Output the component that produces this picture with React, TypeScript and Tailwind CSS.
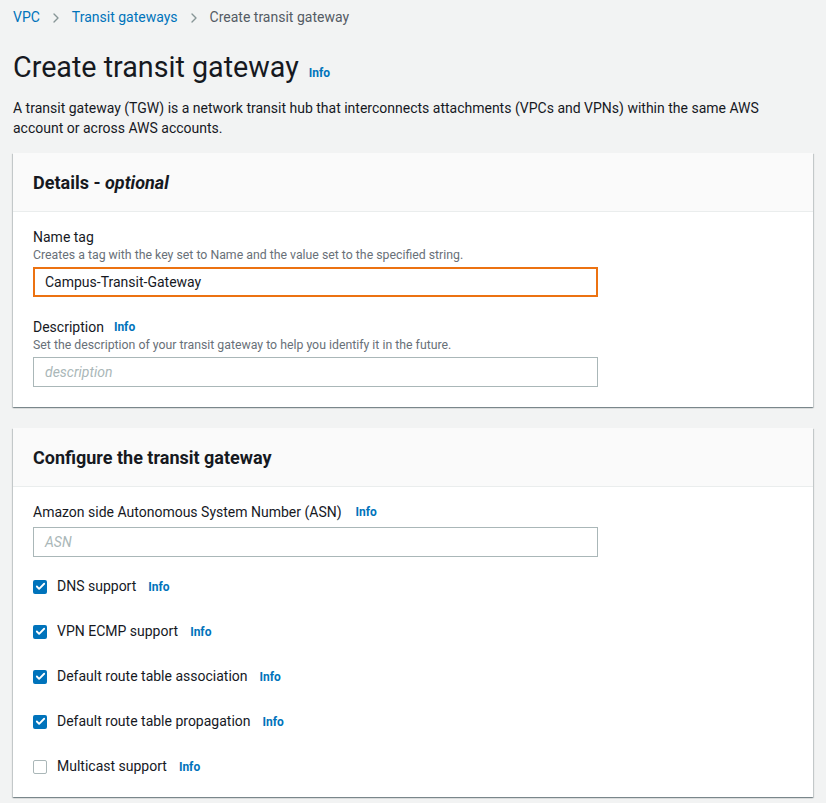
import { Check, ChevronRight } from "lucide-react";

const font = { fontFamily: "Roboto, 'Noto Sans', sans-serif" };

function Info({ className = "" }: { className?: string }) {
  return <span className={`text-[12px] font-bold text-[#0073bb] ${className}`}>Info</span>;
}

function Card({ title, children }: { title: React.ReactNode; children: React.ReactNode }) {
  return (
    <section className="bg-white shadow-[0_1px_1px_0_rgba(0,28,36,0.3),1px_1px_1px_0_rgba(0,28,36,0.15),-1px_1px_1px_0_rgba(0,28,36,0.15)]">
      <div className="h-[59px] flex items-center px-5 bg-[#fafafa] border-b border-[#eaeded]">
        <h2 className="text-[18px] font-bold text-[#16191f]">{title}</h2>
      </div>
      {children}
    </section>
  );
}

function Box({ checked, label }: { checked: boolean; label: string }) {
  return (
    <div className="h-[45px] flex items-center gap-[10px]">
      <span
        className={`w-[14px] h-[14px] rounded-[2px] flex items-center justify-center ${
          checked ? "bg-[#0073bb]" : "bg-white border border-[#aab7b8]"
        }`}
      >
        {checked && <Check size={11} strokeWidth={4} color="white" />}
      </span>
      <span className="text-[14px] text-[#16191f]">{label}</span>
      <Info className="ml-[2px]" />
    </div>
  );
}

export default function App() {
  return (
    <div style={font} className="min-h-[803px] bg-[#f2f3f3] px-[13px] pb-6">
      <nav className="h-[35px] flex items-center gap-[8px] text-[14px]">
        <span className="text-[#0073bb]">VPC</span>
        <ChevronRight size={16} color="#879596" />
        <span className="text-[#0073bb]">Transit gateways</span>
        <ChevronRight size={16} color="#879596" />
        <span className="text-[#545b64]">Create transit gateway</span>
      </nav>
      <div className="mt-[12px] flex items-baseline gap-[10px]">
        <h1 className="text-[28.7px] leading-[40px] text-[#16191f]">Create transit gateway</h1>
        <Info />
      </div>
      <p className="mt-[11px] text-[14px] leading-[20px] text-[#16191f] pr-10">
        A transit gateway (TGW) is a network transit hub that interconnects attachments (VPCs and VPNs) within the same AWS
        account or across AWS accounts.
      </p>

      <div className="mt-[15px] flex flex-col gap-[21px]">
        <Card
          title={
            <>
              Details - <i>optional</i>
            </>
          }
        >
          <div className="px-5 pt-[15px] pb-[20px]">
            <div className="text-[14px] leading-[20px] text-[#16191f]">Name tag</div>
            <div className="text-[12.3px] leading-[16px] text-[#687078]">
              Creates a tag with the key set to Name and the value set to the specified string.
            </div>
            <div className="mt-[4px] w-[565px] h-[30px] border-2 border-[#ec7211] flex items-center px-[10px] text-[14px] text-[#16191f]">
              Campus-Transit-Gateway
            </div>
            <div className="mt-[20px] flex items-center gap-[10px]">
              <span className="text-[14px] leading-[20px] text-[#16191f]">Description</span>
              <Info />
            </div>
            <div className="text-[12.3px] leading-[16px] text-[#687078]">
              Set the description of your transit gateway to help you identify it in the future.
            </div>
            <div className="mt-[4px] w-[565px] h-[30px] border border-[#aab7b8] flex items-center px-[11px] text-[14px] italic text-[#aab7b8]">
              description
            </div>
          </div>
        </Card>

        <Card title="Configure the transit gateway">
          <div className="px-5 pt-[15px] pb-[8px]">
            <div className="flex items-center gap-[10px] leading-[20px]">
              <span className="text-[14px] text-[#16191f]">Amazon side Autonomous System Number (ASN)</span>
              <Info className="ml-[4px]" />
            </div>
            <div className="mt-[5px] w-[565px] h-[30px] border border-[#aab7b8] flex items-center px-[11px] text-[14px] italic text-[#aab7b8]">
              ASN
            </div>
            <div className="mt-[7px]">
              <Box checked label="DNS support" />
              <Box checked label="VPN ECMP support" />
              <Box checked label="Default route table association" />
              <Box checked label="Default route table propagation" />
              <Box checked={false} label="Multicast support" />
            </div>
          </div>
        </Card>
      </div>
    </div>
  );
}
